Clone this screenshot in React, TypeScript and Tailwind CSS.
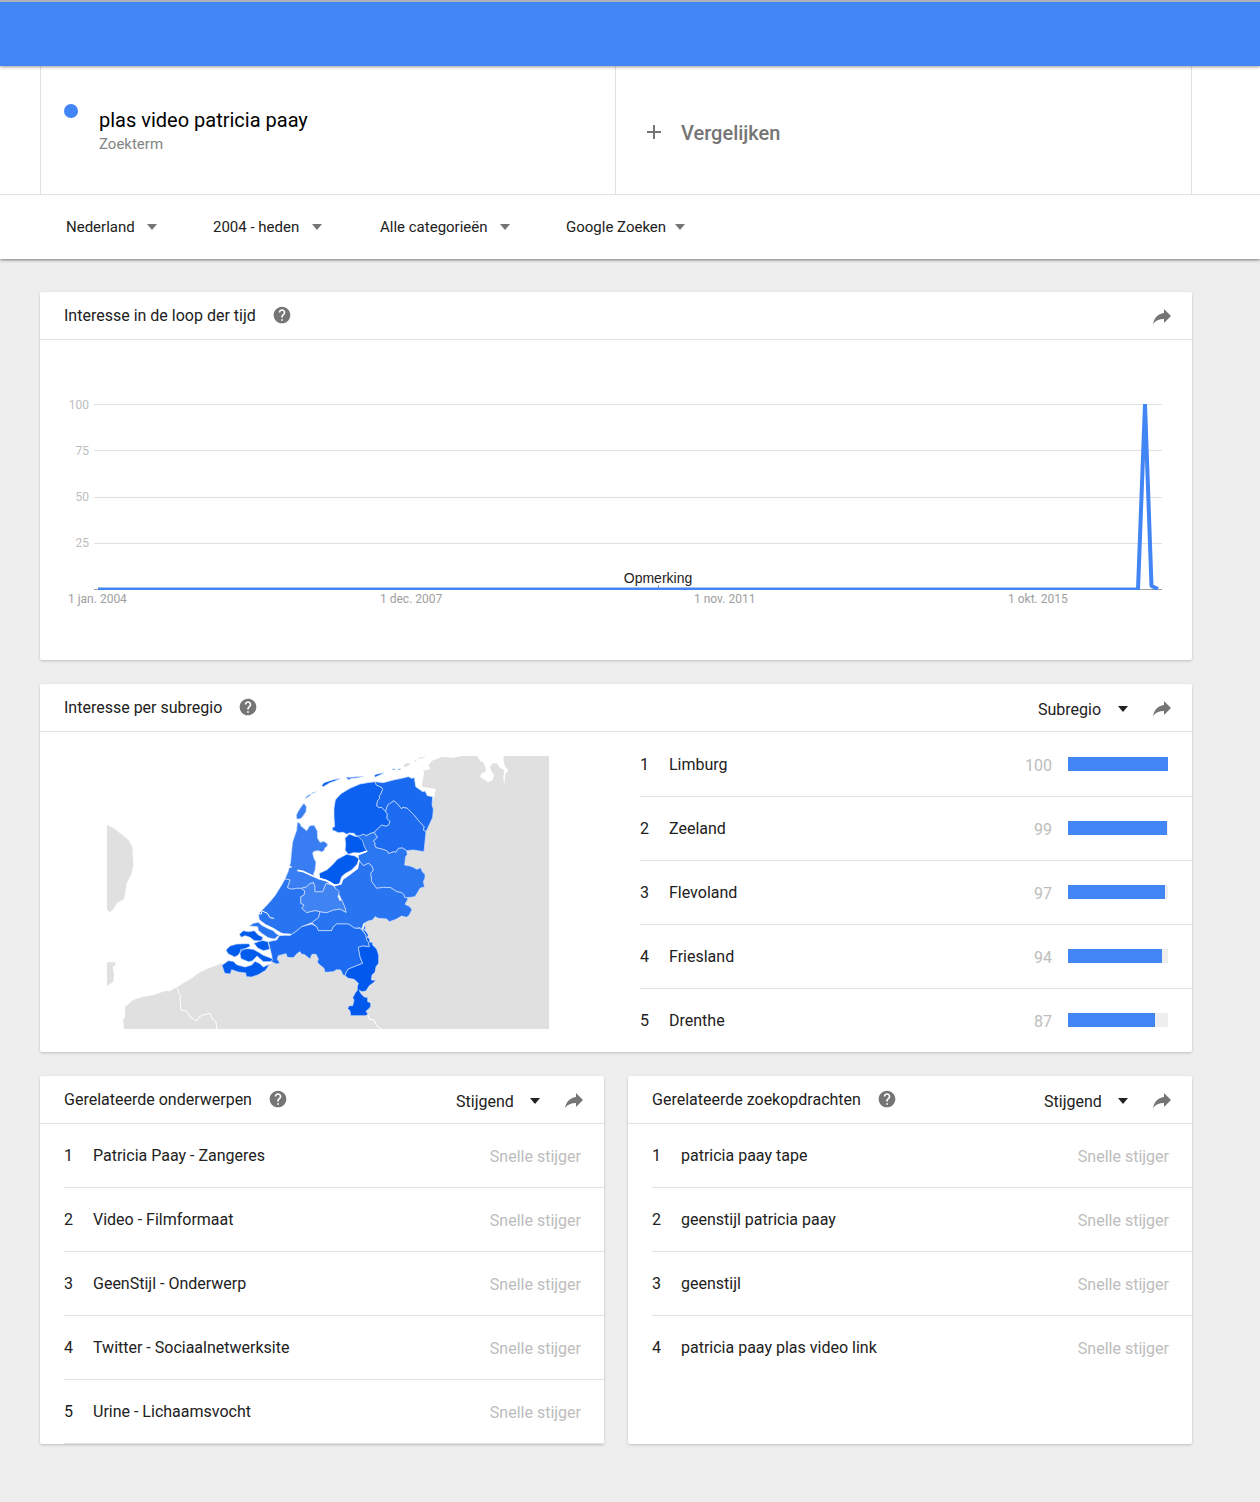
import React from "react";
import { MdHelp } from "react-icons/md";

const filters = [
  { label: "Regio", value: "Nederland", box: "w-[147px] gap-3" },
  { label: "Periode", value: "2004 - heden", box: "w-[167px] gap-3" },
  { label: "Categorie", value: "Alle categorieën", box: "w-[186px] gap-3" },
  { label: "Type zoekopdracht", value: "Google Zoeken", box: "gap-2" },
];

const regions = [
  { name: "Limburg", value: 100 },
  { name: "Zeeland", value: 99 },
  { name: "Flevoland", value: 97 },
  { name: "Friesland", value: 94 },
  { name: "Drenthe", value: 87 },
];

const topics = [
  "Patricia Paay - Zangeres",
  "Video - Filmformaat",
  "GeenStijl - Onderwerp",
  "Twitter - Sociaalnetwerksite",
  "Urine - Lichaamsvocht",
];

const queries = [
  "patricia paay tape",
  "geenstijl patricia paay",
  "geenstijl",
  "patricia paay plas video link",
];

function Caret({ className }: { className: string }) {
  return (
    <svg viewBox="0 0 10 6" className={`pointer-events-none h-[6px] w-[10px] shrink-0 ${className}`} aria-hidden="true">
      <path d="M0 0h10L5 6z" fill="currentColor" />
    </svg>
  );
}

function CardHeader({ title, option, optionLabel }: { title: string; option?: string; optionLabel?: string }) {
  return (
    <header className="flex h-12 items-center border-b border-[#e0e0e0] pl-6 pr-[18px]">
      <h2 className="text-base text-[#212121]">{title}</h2>
      <button type="button" aria-label={`Help: ${title}`} className="mb-[2px] ml-4 text-[#757575]">
        <MdHelp size={20} />
      </button>
      <div className="ml-auto flex items-center">
        {option && (
          <label className="mr-[22px] flex items-center gap-4 pt-[2px]">
            <select
              aria-label={optionLabel}
              className="appearance-none bg-transparent pt-[2px] text-base text-[#212121] outline-none"
            >
              <option>{option}</option>
            </select>
            <Caret className="text-[#212121]" />
          </label>
        )}
        <button type="button" aria-label={`Delen: ${title}`} className="text-[#757575]">
          <svg viewBox="0 0 24 24" className="h-6 w-6" aria-hidden="true">
            <path d="M14 9V5l7 7-7 7v-4.1c-5 0-8.5 1.6-11 5.1 1-5 4-10 11-11z" fill="currentColor" />
          </svg>
        </button>
      </div>
    </header>
  );
}

const cardClass = "overflow-hidden rounded-[2px] bg-white shadow-[0_1px_3px_rgba(0,0,0,0.2)]";

function InterestChart() {
  const grid = [
    { y: 64, textY: 69, label: "100" },
    { y: 110, textY: 115, label: "75" },
    { y: 157, textY: 161, label: "50" },
    { y: 203, textY: 207, label: "25" },
  ];
  const dates = [
    { x: 28, label: "1 jan. 2004" },
    { x: 340, label: "1 dec. 2007" },
    { x: 654, label: "1 nov. 2011" },
    { x: 968, label: "1 okt. 2015" },
  ];
  return (
    <svg viewBox="0 0 1152 320" className="block w-full font-['Roboto',sans-serif]" role="img" aria-label="Interesse in de loop der tijd">
      {grid.map((g) => (
        <g key={g.label}>
          <rect x="54" y={g.y} width="1068" height="1" fill="#e0e0e0" />
          <text x="49" y={g.textY} textAnchor="end" fontSize="12" fill="#bdbdbd">{g.label}</text>
        </g>
      ))}
      <rect x="54" y="249" width="1068" height="1" fill="#9e9e9e" />
      <rect x="618" y="245" width="1" height="4" fill="#9e9e9e" />
      <clipPath id="plot"><rect x="54" y="64" width="1068" height="186" /></clipPath>
      <path d="M58 249.5H1098L1105 64L1111.5 246L1118 249" fill="none" stroke="#4285f4" strokeWidth="4" strokeLinejoin="bevel" clipPath="url(#plot)" />
      {dates.map((d) => (
        <text key={d.label} x={d.x} y="263" fontSize="12" fill="#9e9e9e">{d.label}</text>
      ))}
      <text x="618" y="243" textAnchor="middle" fontSize="14" fill="#222222" fontFamily="Liberation Sans, Arial, sans-serif">Opmerking</text>
    </svg>
  );
}

const land = [
  "M21 240 45 252 85 285 97 305 98 330 100 360 95 385 80 415 76 440 72 462 50 475 42 490 30 502 21 495Z",
  "M21 652 47 652 45 662 38 664 42 690 40 710 21 722Z",
  "M72 852 69 822 75 820 75 785 85 778 95 768 110 761 130 755 160 750 195 738 208 739 235 724 275 700 295 685 320 672 365 655 400 665 440 680 510 658 520 640 600 600 750 640 780 530 890 490 880 340 960 290 985 200 1003 155 1007 132 965 125 972 85 970 76 985 75 991 70 985 62 995 48 1025 36 1060 38 1085 33 1132 33 1140 48 1150 52 1157 70 1157 80 1145 85 1140 95 1150 103 1165 112 1178 105 1182 90 1175 80 1170 65 1178 55 1190 55 1200 68 1213 75 1210 95 1213 120 1215 90 1225 75 1215 65 1210 45 1212 33 1347 33 1347 852Z",
  "M910 62 918 54 928 55 930 60 915 67Z",
  "M943 48 949 43 950 47 946 50Z",
  "M950 40 968 35 980 35 960 41Z",
];

const provinces = [
  { fill: "#0c61f1", d: "M702 190 706 165 716 153 725 145 750 130 780 117 803 113 825 110 829 120 838 124 846 128 848 133 842 148 838 152 839 160 833 166 830 183 838 188 845 187 850 193 857 200 862 206 861 220 870 230 866 240 858 244 845 240 835 250 829 256 822 262 810 266 800 272 790 268 778 274 768 272 762 265 748 264 740 268 730 262 715 263 705 258 697 256 698 247 704 245 702 215Z" },
  { fill: "#1a69f1", d: "M825 110 850 113 880 105 905 100 925 95 935 100 943 98 947 125 958 133 968 140 975 138 982 152 998 155 996 180 1000 192 998 217 990 235 978 260 970 255 972 245 960 232 940 208 922 190 908 187 905 192 895 180 882 167 875 172 865 178 860 188 857 200 850 193 845 187 838 188 830 183 833 166 839 160 838 152 842 148 848 133 846 128 838 124 829 120Z" },
  { fill: "#1c6bf1", d: "M857 200 860 188 865 178 875 172 882 167 895 180 905 192 908 187 922 190 940 208 960 232 972 245 970 255 978 260 975 290 972 320 940 315 920 317 908 309 895 310 888 322 882 320 865 326 862 318 845 312 828 308 824 300 825 293 820 288 832 277 822 262 829 256 835 250 845 240 858 244 866 240 870 230 861 220 862 206Z" },
  { fill: "#2b76f1", d: "M770 275 790 268 800 272 810 266 822 262 832 277 820 288 825 293 824 300 828 308 845 312 862 318 865 326 882 320 888 322 895 310 908 309 920 317 922 328 917 335 914 360 930 363 940 367 950 373 962 368 968 382 975 387 975 398 970 410 974 425 960 430 953 442 945 455 922 458 914 457 911 448 905 443 890 440 872 428 850 427 830 430 815 410 812 385 820 375 815 362 805 355 790 362 776 345 775 330 800 320 790 300 785 288Z" },
  { fill: "#2974f1", d: "M776 345 790 362 805 355 815 362 820 375 812 385 815 410 830 430 850 427 872 428 890 440 905 443 911 448 914 457 922 458 923 464 915 478 928 484 936 494 928 510 920 517 905 513 888 523 868 530 860 522 835 520 825 515 818 525 805 528 792 535 797 550 790 557 780 548 765 550 745 537 710 537 700 545 695 557 655 557 650 545 635 533 655 518 660 500 680 503 700 495 720 492 738 502 735 488 718 450 702 422 725 415 728 400 745 390 770 370 776 352Z" },
  { fill: "#4083f2", d: "M603 430 620 425 628 417 640 412 645 425 645 440 668 440 678 415 690 418 700 422 706 430 718 440 714 455 720 468 725 464 735 488 738 502 720 492 700 495 680 503 660 500 645 497 620 503 605 490 612 480 602 475 602 455 612 450 614 438Z" },
  { fill: "#387ef2", d: "M592 232 600 235 603 243 620 257 625 249 628 243 642 240 652 258 653 280 660 292 672 289 683 297 681 305 675 308 673 316 665 321 655 317 642 319 638 325 642 340 648 352 645 378 640 388 650 398 660 402 680 408 690 418 678 415 668 440 645 440 645 425 640 412 628 417 620 425 603 430 590 430 575 433 562 428 570 405 555 402 565 378 572 350 574 325 578 290 590 255Z" },
  { fill: "#387ef2", d: "M612 175 619 185 618 200 608 215 600 222 590 222 589 210 595 198 605 183Z" },
  { fill: "#387ef2", d: "M615 160 622 152 632 148 632 151 618 160ZM634 146 640 142 648 140 640 145Z" },
  { fill: "#0c61f1", d: "M665 122 672 113 700 104 722 100 705 108 690 113 670 125ZM738 97 750 97 792 94 770 99 755 100 745 104ZM822 93 828 88 852 83 845 88 826 96Z" },
  { fill: "#2974f1", d: "M555 402 570 405 562 428 575 433 590 430 603 430 614 438 612 450 602 455 602 475 612 480 605 490 620 503 645 497 660 500 655 518 635 533 620 539 605 545 590 558 572 570 555 568 535 562 520 550 497 540 478 525 476 510 480 500 490 492 510 470 525 452 545 420Z" },
  { fill: "#2974f1", d: "M448 543 460 535 475 532 485 541 505 551 520 557 528 566 537 571 523 582 505 578 485 565 475 556 473 545Z" },
  { fill: "#1c6bf1", d: "M505 590 530 585 538 572 572 570 590 558 605 545 635 537 650 545 655 557 695 557 700 545 710 537 745 537 765 550 780 550 790 560 798 570 800 585 806 592 808 605 788 603 775 607 780 635 788 655 770 662 745 672 739 682 735 692 729 690 722 675 710 674 700 680 675 682 672 670 660 660 652 652 655 642 648 628 636 628 630 642 620 634 612 628 605 628 600 620 592 625 580 638 562 637 558 626 535 632 532 642 540 655 528 657 515 650 516 635 510 610Z" },
  { fill: "#0059ec", d: "M785 550 797 558 805 570 802 578 808 580 810 592 818 592 818 600 830 612 836 630 836 655 828 665 825 682 816 690 814 705 828 706 820 713 808 722 798 738 785 740 778 735 782 745 792 755 797 757 803 757 803 770 812 773 812 785 803 795 798 798 804 808 796 812 752 812 750 798 743 790 748 782 758 782 762 765 758 758 765 745 772 735 772 725 775 715 762 703 745 700 735 692 739 682 745 672 770 662 788 655 780 635 775 607 788 603 808 605 806 592 800 585 798 570Z" },
  { fill: "#015bed", d: "M418 568 430 557 445 560 463 557 475 570 488 576 486 588 463 587 450 577 435 572 424 577ZM378 615 390 603 410 597 447 596 451 604 435 611 423 619 414 631 404 636 384 626ZM422 613 445 611 460 613 475 621 490 631 510 638 519 643 512 650 490 650 471 633 457 648 445 650 423 641 420 627ZM462 595 485 586 504 590 509 613 490 617 473 609Z" },
  { fill: "#015bed", d: "M366 661 385 647 400 649 410 659 435 666 455 660 465 649 480 656 490 666 509 657 497 676 475 689 455 696 439 695 437 684 415 681 395 674 391 687 374 685Z" },
  { fill: "#015bed", d: "M735 280 748 267 765 274 775 275 788 288 792 303 800 318 780 324 760 323 745 328 735 315 737 300ZM658 385 680 375 697 360 712 343 740 328 765 333 777 342 773 356 755 375 735 386 725 395 718 418 705 420 690 410 658 398Z" },
];

function NetherlandsMap() {
  return (
    <svg viewBox="21 33 1326 819" className="block w-full" role="img" aria-label="Kaart van Nederland per subregio">
      {land.map((d) => (
        <path key={d} d={d} fill="#e0e0e0" />
      ))}
      <path
        d="M232 728 237 745 243 752 240 765 243 795 258 797 272 818 290 828 298 815 310 810 330 805 337 822 348 830 350 852M805 812 808 822 822 825 830 843 845 852"
        fill="none"
        stroke="#ffffff"
        strokeWidth="3"
      />
      <path d="M409 660 435 668 455 661 465 650 480 657 490 667 512 656 516 640 490 648 460 652 400 645Z" fill="#ffffff" />
      {provinces.map((p) => (
        <path key={p.d} d={p.d} fill={p.fill} stroke="#d3e3fd" strokeWidth="2" strokeLinejoin="round" />
      ))}
      <path
        d="M478 527 497 541 520 552 545 567 572 569M592 376 608 379 632 390 655 400 680 407 703 421 722 417 728 402 745 390 772 370 777 345M776 328 802 318M662 372 655 368 645 382M792 536 788 552M562 365 575 366"
        fill="none"
        stroke="#ffffff"
        strokeWidth="5"
        strokeLinejoin="round"
      />
      <path d="M642 388 656 384 660 400 645 394Z" fill="#ffffff" />
      <path d="M475 497 485 500 484 507 476 506M485 497 502 505 510 518 522 520" fill="none" stroke="#ffffff" strokeWidth="3" />
      <path d="M877 73h9M894 73h8" stroke="#7caaf5" strokeWidth="3" />
    </svg>
  );
}

function RelatedCard({ title, items, closed }: { title: string; items: string[]; closed?: boolean }) {
  return (
    <section className={`${cardClass} min-h-[368px]`}>
      <CardHeader title={title} option="Stijgend" optionLabel={`Sortering: ${title}`} />
      <ol className="pl-6">
        {items.map((item, i) => (
          <li
            key={item}
            className={`flex h-16 items-center border-[#e0e0e0] pr-[23px] text-base ${i < items.length - 1 || closed ? "border-b" : ""}`}
          >
            <span className="w-[29px] text-[#212121]">{i + 1}</span>
            <a href="#" className="text-[#212121]">{item}</a>
            <span className="ml-auto pt-[2px] text-[#bdbdbd]">Snelle stijger</span>
          </li>
        ))}
      </ol>
    </section>
  );
}

export default function App() {
  return (
    <div className="min-h-screen bg-[#eeeeee] font-['Roboto',sans-serif]">
      <div className="relative h-[66px] border-t-2 border-[#b0b0b8] bg-[#4285f4] shadow-[0_1px_3px_rgba(0,0,0,0.4)]" />
      <div className="bg-white shadow-[0_1px_3px_rgba(0,0,0,0.5)]">
        <div className="border-b border-[#e0e0e0] pl-10 pr-[68px]">
          <div className="grid h-32 grid-cols-2 border-x border-[#e0e0e0]">
            <div className="flex border-r border-[#e0e0e0] pl-[23px] pt-[38px]">
              <span className="h-[14px] w-[14px] rounded-full bg-[#4285f4]" />
              <div className="ml-[21px] pt-1">
                <h1 className="text-[20px] leading-6 text-black">plas video patricia paay</h1>
                <p className="text-[15px] leading-6 text-[#848484]">Zoekterm</p>
              </div>
            </div>
            <button type="button" className="flex items-center gap-5 pl-[31px] pt-1 text-left text-[20px] font-medium text-[#757575]">
              <svg viewBox="0 0 14 14" className="h-[14px] w-[14px]" aria-hidden="true">
                <path d="M6 0h2v6h6v2H8v6H6V8H0V6h6z" fill="currentColor" />
              </svg>
              <span className="pt-[2px]">Vergelijken</span>
            </button>
          </div>
        </div>
        <div className="flex h-16 items-center pl-[66px] pr-[68px]">
          {filters.map((f) => (
            <label key={f.label} className={`flex items-center ${f.box}`}>
              <select aria-label={f.label} className="appearance-none bg-transparent text-[15px] text-[#212121] outline-none">
                <option>{f.value}</option>
              </select>
              <Caret className="text-[#757575]" />
            </label>
          ))}
        </div>
      </div>

      <main className="flex flex-col gap-6 pb-[58px] pl-10 pr-[68px] pt-[33px]">
        <section className={cardClass}>
          <CardHeader title="Interesse in de loop der tijd" />
          <InterestChart />
        </section>

        <section className={cardClass}>
          <CardHeader title="Interesse per subregio" option="Subregio" optionLabel="Weergave" />
          <div className="grid grid-cols-[25fr_23fr]">
            <div className="pl-[67px] pr-[91px] pt-6">
              <NetherlandsMap />
            </div>
            <ol>
              {regions.map((r, i) => (
                <li
                  key={r.name}
                  className={`flex h-16 items-center border-t pr-6 text-base ${i > 0 ? "border-[#e0e0e0]" : "border-transparent"}`}
                >
                  <span className="w-[29px] text-[#212121]">{i + 1}</span>
                  <span className="text-[#212121]">{r.name}</span>
                  <span className="ml-auto pt-[2px] text-[#bdbdbd]">{r.value}</span>
                  <div className="mb-[2px] ml-4 h-[14px] w-[100px] bg-[#eeeeee]">
                    <div className="h-full bg-[#4285f4]" style={{ width: `${r.value}%` }} />
                  </div>
                </li>
              ))}
            </ol>
          </div>
        </section>

        <div className="grid grid-cols-2 gap-6">
          <RelatedCard title="Gerelateerde onderwerpen" items={topics} closed />
          <RelatedCard title="Gerelateerde zoekopdrachten" items={queries} />
        </div>
      </main>
    </div>
  );
}
